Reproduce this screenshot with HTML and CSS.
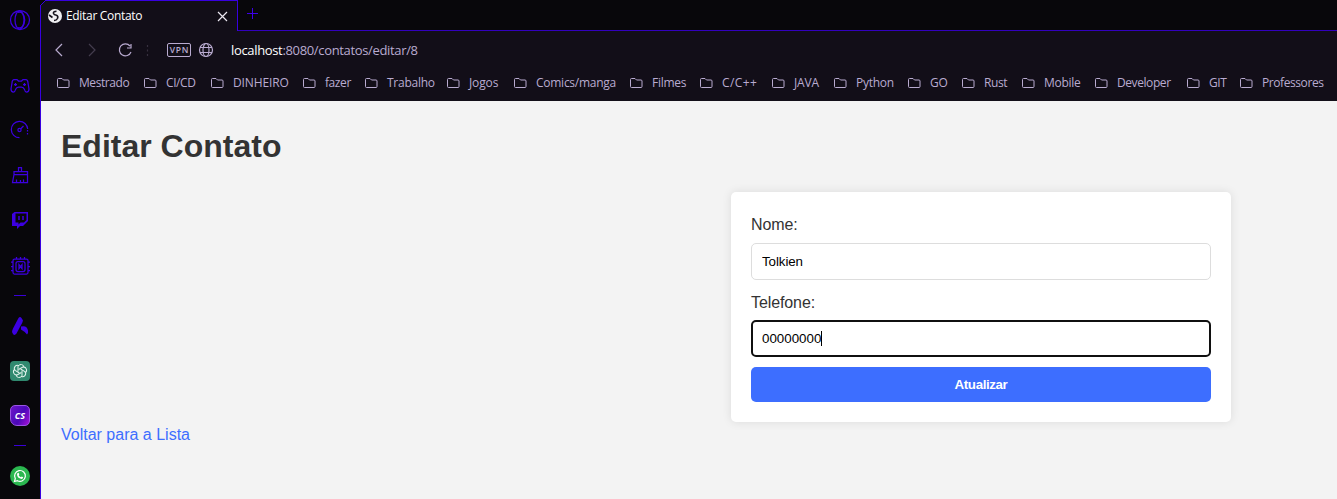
FILE: index.html
```html
<!DOCTYPE html>
<html lang="pt-BR">
<head>
<meta charset="utf-8">
<title>Editar Contato</title>
<link rel="stylesheet" href="styles.css">
</head>
<body>
<svg width="0" height="0" class="defs"><defs>
<symbol id="folder" viewBox="0 0 13 12"><path d="M1.500 1.500Q.5 1.500.5 2.500V9.500Q.5 10.500 1.500 10.500H11Q12 10.500 12 9.500V4Q12 3 11 3H6.500L5 1.500Z" fill="none" stroke="currentColor"/></symbol>
</defs></svg>
<div class="browser">
<aside class="sidebar">
<div class="cell first"><svg width="22" height="22" viewBox="0 0 22 22"><circle cx="11" cy="11" r="9.500"/><ellipse cx="10.500" cy="11" rx="4.500" ry="9"/><path d="M9 3.500Q13 2 15 7Q16.500 11 15 15Q13 20 9 18.500"/></svg></div>
<div class="cell"><svg width="20" height="16" viewBox="0 0 20 16"><path d="M4 1.500H7L8.500 3H11.500L13 1.500H16Q18 2 18 5L19 11Q19 14 16.500 14Q15 14 14.500 11.500Q13.500 9 11.500 9H8.500Q6.500 9 5.500 11.500Q5 14 3.500 14Q1 14 1 11L2 5Q2 2 4 1.500ZM5.500 5V8M4 6.500H7M14.500 5V8M13 6.500H16"/></svg></div>
<div class="cell"><svg width="20" height="20" viewBox="0 0 20 20"><path d="M9.500 17.700A8.200 8.200 0 1 1 17.700 9"/><path d="M17.500 10V16" stroke-dasharray="1.500 1.500"/><circle cx="9.500" cy="10" r="1.600"/><path d="M10.500 9L13.500 6"/></svg></div>
<div class="cell"><svg width="18" height="18" viewBox="0 0 18 18"><path d="M7.500 5V1.500H10.500V5M3 5.500H16.500V8.500H3ZM3 8.500L1.500 16.500H16.500V8.500M5.500 16V13.500M9.500 16V14M12.500 16V13.500"/></svg></div>
<div class="cell twitch"><svg width="18" height="18" viewBox="0 0 18 18"><path class="solid" d="M1 3L3.500 1H17V10L12 15H9L6 18V15H1ZM4.500 2.500V11.500H7.500V13.500L9.500 11.500H13L15.500 9V2.500Z" fill-rule="evenodd"/><path d="M8 5V9M12 5V9" stroke-width="1.500"/></svg></div>
<div class="cell"><svg width="20" height="20" viewBox="0 0 20 20"><rect x="3" y="3" width="15" height="15" rx="1.500"/><rect x="6" y="5.500" width="9" height="10" rx="2"/><path d="M9 8.500V12.500L10.500 10.500L12 12.500V8.500L10.500 10.500ZM6.500 3V1M10.500 3V1M14.500 3V1M1 6H3M1 10.500H3M1 14.500H3M18 6H20M18 10.500H20M18 14.500H20"/></svg></div>
<div class="cell"><span class="rule"></span></div>
<div class="cell"><svg width="18" height="20" viewBox="0 0 18 20"><path class="solid" d="M7.500 2Q9 0 10.500 2L12 4.500Q11.500 7 9.500 10L5.500 17.500Q3.500 20 2 18L1 16Q1 14.500 2 12.500ZM10 10.500Q16 9 17 14.500Q17.500 17 16 18.500Q13 15 10 13.500Z"/></svg></div>
<div class="cell"><svg width="20" height="20" viewBox="0 0 20 20" class="gpt"><rect width="20" height="20" rx="4"/><path d="M8 10.500V5.500Q9 3 11.500 3.500Q14 4 14 6.500"/><path transform="rotate(60 10 10)" d="M8 10.500V5.500Q9 3 11.500 3.500Q14 4 14 6.500"/><path transform="rotate(120 10 10)" d="M8 10.500V5.500Q9 3 11.500 3.500Q14 4 14 6.500"/><path transform="rotate(180 10 10)" d="M8 10.500V5.500Q9 3 11.500 3.500Q14 4 14 6.500"/><path transform="rotate(240 10 10)" d="M8 10.500V5.500Q9 3 11.500 3.500Q14 4 14 6.500"/><path transform="rotate(300 10 10)" d="M8 10.500V5.500Q9 3 11.500 3.500Q14 4 14 6.500"/></svg></div>
<div class="cell"><span class="cs">CS</span></div>
<div class="cell"><span class="rule"></span></div>
<div class="cell"><svg width="20" height="20" viewBox="0 0 20 20" class="wa"><circle cx="10" cy="10" r="10"/><path d="M4.500 15.500L5.300 12.600A5.400 5.400 0 1 1 7.500 14.700Z"/><path class="phone" d="M7.500 7Q8.500 6.200 9 7.500L9.300 8.500L8.700 9.200Q9.500 10.700 11 11.300L11.700 10.500L13.200 11.300Q13 13 11.500 13Q7.200 12 7 8.500Z"/></svg></div>
</aside>
<div class="main">
<header class="chrome">
<div class="tabs">
<div class="tab"><svg class="edge" width="7" height="7" viewBox="0 0 7 7"><path class="mask" d="M0 0H5L0 5Z"/><path d="M.5 7V5.500L5.500.5H7"/></svg>
<svg class="favicon" width="14" height="14" viewBox="0 0 14 14"><circle cx="7" cy="7" r="7" fill="#f0eff2" stroke="none"/><path d="M8.500 2.200Q5 2.200 5.500 4.500Q6 6 8.500 6.200Q10.500 7 9.500 9.500Q8.500 11.500 6 11.500M1 6L4.500 8.500" fill="none" stroke="#14101a" stroke-width="1.600"/></svg>
<span class="tabname">Editar Contato</span>
<svg class="close" width="11" height="11" viewBox="0 0 11 11"><path d="M1 1L10 10M10 1L1 10"/></svg></div>
<div class="newtab"><svg width="12" height="12" viewBox="0 0 12 12"><path d="M5.500 0V11M0 5.500H11"/></svg></div>
</div>
<div class="toolbar">
<svg width="100" height="20" viewBox="0 0 100 20"><path d="M9 4L3 10L9 16"/><path d="M36 4L42 10L36 16" class="dim"/><path d="M77 6A6 6 0 1 0 78 12M78 4V8H74"/><path d="M94.500 5V16" class="dots"/></svg>
<span class="vpn">VPN</span>
<svg class="globe" width="16" height="16" viewBox="0 0 16 16"><circle cx="8" cy="8" r="6.500"/><ellipse cx="8" cy="8" rx="3" ry="6.500"/><path d="M2 5.500H14M2 10.500H14"/></svg>
<span class="url"><b>localhost</b>:8080/contatos/editar/8</span>
</div>
<nav class="bookmarks">
<span><svg><use href="#folder"/></svg>Mestrado</span><span><svg><use href="#folder"/></svg>CI/CD</span><span class="loose"><svg><use href="#folder"/></svg>DINHEIRO</span><span><svg><use href="#folder"/></svg>fazer</span><span class="mid"><svg><use href="#folder"/></svg>Trabalho</span><span class="loose"><svg><use href="#folder"/></svg>Jogos</span><span class="mid"><svg><use href="#folder"/></svg>Comics/manga</span><span class="mid"><svg><use href="#folder"/></svg>Filmes</span><span class="wide"><svg><use href="#folder"/></svg>C/C++</span><span class="loose"><svg><use href="#folder"/></svg>JAVA</span><span class="mid"><svg><use href="#folder"/></svg>Python</span><span class="loose"><svg><use href="#folder"/></svg>GO</span><span><svg><use href="#folder"/></svg>Rust</span><span class="mid"><svg><use href="#folder"/></svg>Mobile</span><span><svg><use href="#folder"/></svg>Developer</span><span><svg><use href="#folder"/></svg>GIT</span><span><svg><use href="#folder"/></svg>Professores</span>
</nav>
</header>
<main class="page">
<h1>Editar Contato</h1>
<form class="card">
<label for="nome">Nome:</label>
<input id="nome" type="text" value="Tolkien">
<label for="tel">Telefone:</label>
<div class="field">00000000<i class="caret"></i></div>
<button type="button">Atualizar</button>
</form>
<a class="back">Voltar para a Lista</a>
</main>
</div>
</div>
</body>
</html>
```
FILE: styles.css
```css
* { box-sizing: border-box; }
body { margin: 0; overflow: hidden; font-family: "Liberation Sans", Arial, sans-serif; }
svg { flex: none; display: block; fill: none; stroke: currentColor; }
.defs { display: none; }
.browser { display: flex; width: 1337px; height: 499px; background: #08070b; }
.sidebar {
  width: 40px; flex: none; display: grid; color: #3c00e0; overflow: hidden;
  grid-template-rows: 64px 44px 44px 46px 45px 46px 12px 50px 39px 50px 11px 50px;
}
.cell { display: flex; align-items: center; justify-content: center; }
.cell svg { stroke-width: 1.25; }
.first { padding-bottom: 24px; }
.twitch { padding-bottom: 1px; }
.solid { fill: currentColor; stroke: none; }
.rule { width: 12px; height: 1px; background: #3a00d8; }
.gpt rect { fill: #30896f; stroke: none; }
.gpt path { stroke: #e2f3ed; stroke-width: 1; }
.cs {
  width: 20px; height: 21px; border-radius: 5px 5px 5px 7px; border: 1px solid #9a55e4;
  background: linear-gradient(120deg, #6c16c9, #4a08b8 55%, #a610d8);
  color: #fff; font: italic bold 9px/19px "Open Sans", sans-serif; text-align: center;
}
.wa circle { fill: #2bb750; stroke: none; }
.wa path { stroke: #fff; stroke-width: 1.2; }
.wa .phone { fill: #fff; stroke: none; }

.main { flex: 1; min-width: 0; display: flex; flex-direction: column; }
.chrome { height: 101px; color: #b9abd0; font-family: "Open Sans", "Noto Sans", sans-serif; border-left: 1px solid #3800e0; }
.tabs { display: flex; height: 31px; }
.tab {
  width: 197px; height: 31px; position: relative; display: flex; align-items: center; padding: 0 9px 0 7px;
  background: #120e18; border-top: 1px solid #3800e0; border-right: 1px solid #3800e0;
}
.edge { position: absolute; left: -1px; top: -1px; stroke: #3800e0; }
.mask { fill: #08070b; stroke: #08070b; }
.favicon { margin-bottom: 1px; }
.tabname { margin-left: 4px; padding-bottom: 1px; color: #fff; font-size: 12px; letter-spacing: -.32px; }
.close { margin-left: auto; stroke: #ece8f2; stroke-width: 1.2; }
.newtab { flex: 1; border-bottom: 1px solid #3200bd; color: #3c00e8; padding: 8px 0 0 9px; }
.toolbar { height: 37px; background: #120e18; display: flex; align-items: center; padding: 1px 0 0 12px; }
.toolbar svg { stroke-width: 1.2; }
.toolbar .dim { stroke: #443d4e; }
.toolbar .dots { stroke: #37303f; stroke-dasharray: 2 2.500; }
.vpn {
  width: 24px; height: 14px; margin: 0 0 0 14px; border: 1px solid #b9abd0; border-radius: 2px;
  font: 600 8.500px/12px "Open Sans", sans-serif; letter-spacing: .7px; text-align: center; padding-left: 1px;
}
.globe { margin: 0 17px 0 7px; }
.url { font-size: 13px; letter-spacing: -.34px; }
.url b { font-weight: 400; color: #fff; }
.bookmarks {
  height: 33px; padding: 0 0 4px 15px; background: #120e18; display: grid; align-items: center;
  grid-template-columns: 87px 67px 92px 62px 82px 67px 116px 70px 72px 62px 74px 54px 60px 73px 92px 53px 97px;
  font-size: 12px; letter-spacing: -.42px; white-space: nowrap;
}
.bookmarks span { display: flex; align-items: center; }
.bookmarks svg { width: 13px; height: 12px; margin: 1px 9px 0 1px; }
.bookmarks .mid { letter-spacing: -.26px; }
.bookmarks .loose { letter-spacing: -.12px; }
.bookmarks .wide { letter-spacing: .4px; }

.page { flex: 1; padding: 27px 20px 0; background: #f3f3f3; border-left: 1px solid #3800e0; color: #333; }
h1 { margin: 0 0 27px; font-size: 32px; line-height: 37px; }
.card {
  width: 500px; height: 230px; margin-left: 670px; padding: 20px;
  border-radius: 5px; background: #fff; box-shadow: 0 0 10px rgba(0, 0, 0, .1);
}
label { display: block; height: 31px; line-height: 25px; font-size: 16px; letter-spacing: -.1px; }
input, .field {
  display: block; width: 460px; height: 37px; margin: 0 0 10px; padding: 0 10px;
  border: 1px solid #ddd; border-radius: 5px; background: #fff; color: #000;
  font: 13.333px "Liberation Sans", Arial, sans-serif; letter-spacing: -.08px;
}
.field { display: flex; align-items: center; margin-top: -1px; padding: 0 9px; border: 2px solid #101010; letter-spacing: 0; }
.caret { width: 1px; height: 15px; background: #000; }
button {
  display: block; width: 460px; height: 35px; padding: 0; border: 0; border-radius: 5px;
  background: #3d6eff; color: #fff; font: bold 13.333px "Liberation Sans", Arial, sans-serif; letter-spacing: -.38px;
}
.back { display: block; margin-top: 3px; line-height: 19px; color: #3d6eff; font-size: 16px; }
```
